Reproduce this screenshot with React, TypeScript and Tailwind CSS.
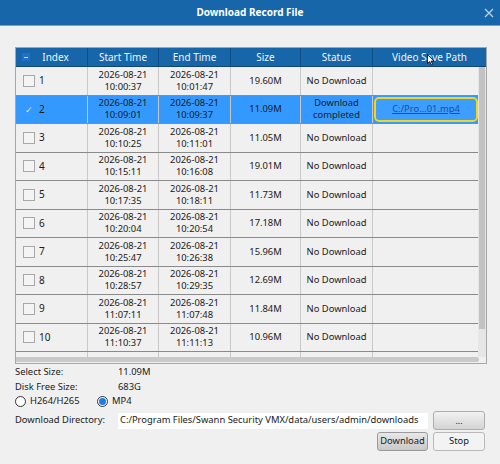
import React from 'react'

interface Rec {
  idx: number
  start: [string, string]
  end: [string, string]
  size: string
  status: string
  path?: string
}

const records: Rec[] = [
  { idx: 1, start: ['2026-08-21', '10:00:37'], end: ['2026-08-21', '10:01:47'], size: '19.60M', status: 'No Download' },
  { idx: 2, start: ['2026-08-21', '10:09:01'], end: ['2026-08-21', '10:09:37'], size: '11.09M', status: 'Download completed', path: 'C:/Pro...01.mp4' },
  { idx: 3, start: ['2026-08-21', '10:10:25'], end: ['2026-08-21', '10:11:01'], size: '11.05M', status: 'No Download' },
  { idx: 4, start: ['2026-08-21', '10:15:11'], end: ['2026-08-21', '10:16:08'], size: '19.01M', status: 'No Download' },
  { idx: 5, start: ['2026-08-21', '10:17:35'], end: ['2026-08-21', '10:18:11'], size: '11.73M', status: 'No Download' },
  { idx: 6, start: ['2026-08-21', '10:20:04'], end: ['2026-08-21', '10:20:54'], size: '17.18M', status: 'No Download' },
  { idx: 7, start: ['2026-08-21', '10:25:47'], end: ['2026-08-21', '10:26:38'], size: '15.96M', status: 'No Download' },
  { idx: 8, start: ['2026-08-21', '10:28:57'], end: ['2026-08-21', '10:29:35'], size: '12.69M', status: 'No Download' },
  { idx: 9, start: ['2026-08-21', '11:07:11'], end: ['2026-08-21', '11:07:48'], size: '11.84M', status: 'No Download' },
  { idx: 10, start: ['2026-08-21', '11:10:37'], end: ['2026-08-21', '11:11:13'], size: '10.96M', status: 'No Download' },
  { idx: 11, start: ['', ''], end: ['', ''], size: '', status: '' },
]

const cols = ['w-[72px]', 'w-[71px]', 'w-[72px]', 'w-[70px]', 'w-[72px]', 'w-[106px]']

function Row({ r }: { r: Rec }) {
  const sel = r.idx === 2
  const cell = 'flex shrink-0 items-center border-r border-[#c8c8c8]'
  return (
    <div className={`flex h-[28.5px] shrink-0 border-b border-[#8a8a8a] ${sel ? 'bg-[#3399ff]' : 'bg-[#f0f0f0]'}`}>
      <div className={`${cell} ${cols[0]} pl-[7px] gap-[4px]`}>
        {r.idx <= 10 &&
          (sel ? (
            <span className="flex h-[12px] w-[12px] items-center justify-center text-[9px] leading-none text-[#d8ecff]">✓</span>
          ) : (
            <span className="h-[12px] w-[12px] border border-[#a8a8a8] bg-[#f4f4f4]" />
          ))}
        {r.idx <= 10 && <span className="text-[10px]">{r.idx}</span>}
      </div>
      <div className={`${cell} ${cols[1]} flex-col justify-center leading-[12px]`}>
        <span>{r.start[0]}</span>
        <span>{r.start[1]}</span>
      </div>
      <div className={`${cell} ${cols[2]} flex-col justify-center leading-[12px]`}>
        <span>{r.end[0]}</span>
        <span>{r.end[1]}</span>
      </div>
      <div className={`${cell} ${cols[3]} justify-center`}>{r.size}</div>
      <div className={`${cell} ${cols[4]} justify-center text-center leading-[12px]`}>
        {sel ? (
          <span>
            Download
            <br />
            completed
          </span>
        ) : (
          r.status
        )}
      </div>
      <div className={`flex shrink-0 items-center ${cols[5]}`}>
        {r.path && (
          <div className="mx-[1px] flex h-[25px] w-[104px] items-center justify-center rounded-[5px] border-[2px] border-[#f2d71c] bg-[#3d9eff] text-[#1b4f9c] underline">
            {r.path}
          </div>
        )}
      </div>
    </div>
  )
}

export default function App() {
  const headers = ['Index', 'Start Time', 'End Time', 'Size', 'Status', 'Video Save Path']
  return (
    <div
      className="flex h-[464px] w-[500px] flex-col bg-[#f0f0f0] text-[9.4px] text-[#1a1a1a]"
      style={{ fontFamily: '"Noto Sans", "Open Sans", sans-serif' }}
    >
      <div className="relative flex h-[26px] shrink-0 items-center justify-center border-b border-[#6ea3d3] bg-[#1766a9]">
        <span className="text-[10px] font-bold text-white">Download Record File</span>
        <svg className="absolute right-[6px] top-[8px]" width="10" height="10" viewBox="0 0 10 10">
          <path d="M1 1 L9 9 M9 1 L1 9" stroke="#b9d3ea" strokeWidth="1.3" />
        </svg>
      </div>

      <div className="ml-[15px] mt-[21px] flex h-[317px] w-[472px] flex-col border border-[#a6a6a6] bg-[#f0f0f0]">
        <div className="flex h-[19px] shrink-0 border-b border-[#0d4677] bg-[#1766a9] text-[10px] text-[#eef5fc]">
          {headers.map((h, i) => (
            <div
              key={h}
              className={`relative flex shrink-0 items-center justify-center ${i < 5 ? cols[i] + ' border-r border-[#0f4f86]' : 'flex-1'}`}
            >
              {i === 0 && (
                <span className="absolute left-[6px] top-[5px] flex h-[8px] w-[8px] items-center justify-center bg-[#1f6fd0]">
                  <span className="h-[1px] w-[4px] bg-[#cfe3ff]" />
                </span>
              )}
              <span className={i === 0 ? 'pl-[8px]' : ''}>{h}</span>
              {i === 5 && (
                <svg className="absolute left-[54px] top-[6px]" width="8" height="12" viewBox="0 0 8 12">
                  <path d="M0.5 0.5 L0.5 9.5 L2.7 7.6 L4.2 11 L5.6 10.4 L4.1 7.1 L7 7.1 Z" fill="#fff" stroke="#000" strokeWidth="0.8" />
                </svg>
              )}
            </div>
          ))}
        </div>
        <div className="flex min-h-0 flex-1">
          <div className="flex min-w-0 flex-1 flex-col overflow-hidden">
            {records.map((r) => (
              <Row key={r.idx} r={r} />
            ))}
          </div>
          <div className="flex w-[8px] shrink-0 flex-col bg-[#e6e6e6] pl-[1px]">
            <div className="h-[262px] w-[6px] bg-[#c3c3c3]" />
          </div>
        </div>
        <div className="flex h-[6px] shrink-0 items-start">
          <div className="h-[5px] w-[463px] rounded-r-[3px] bg-[#c9c9c9]" />
        </div>
      </div>

      <div className="ml-[15px] mt-[1px] flex flex-col whitespace-nowrap">
        <div className="flex h-[15px] items-center">
          <span className="w-[103px]">Select Size:</span>
          <span>11.09M</span>
        </div>
        <div className="flex h-[15px] items-center">
          <span className="w-[103px]">Disk Free Size:</span>
          <span>683G</span>
        </div>
        <div className="flex h-[13px] items-center">
          <span className="h-[11px] w-[11px] rounded-full border border-[#333] bg-white" />
          <span className="ml-[4px] w-[67px]">H264/H265</span>
          <span className="flex h-[11px] w-[11px] items-center justify-center rounded-full border border-[#333] bg-white">
            <span className="h-[7px] w-[7px] rounded-full bg-[#1e7ce6]" />
          </span>
          <span className="ml-[4px]">MP4</span>
        </div>
        <div className="mt-[3px] flex h-[19px] items-center">
          <span className="w-[103px]">Download Directory:</span>
          <div className="flex h-[16px] w-[310px] items-center bg-white pl-[2px]">
            C:/Program Files/Swann Security VMX/data/users/admin/downloads
          </div>
          <button className="ml-[5px] flex h-[19px] w-[52px] items-center justify-center rounded-[3px] border border-[#adadad] bg-gradient-to-b from-[#f2f2f2] to-[#d4d4d4] text-[9px]">
            ...
          </button>
        </div>
        <div className="mt-[2px] flex justify-end pr-[15px] gap-[5px]">
          <button className="flex h-[19px] w-[51px] items-center justify-center rounded-[3px] border border-[#9a9a9a] bg-gradient-to-b from-[#e8e8e8] to-[#c8c8c8]">
            Download
          </button>
          <button className="flex h-[19px] w-[52px] items-center justify-center rounded-[3px] border border-[#b8b8b8] bg-[#f3f3f3]">
            Stop
          </button>
        </div>
      </div>
    </div>
  )
}
